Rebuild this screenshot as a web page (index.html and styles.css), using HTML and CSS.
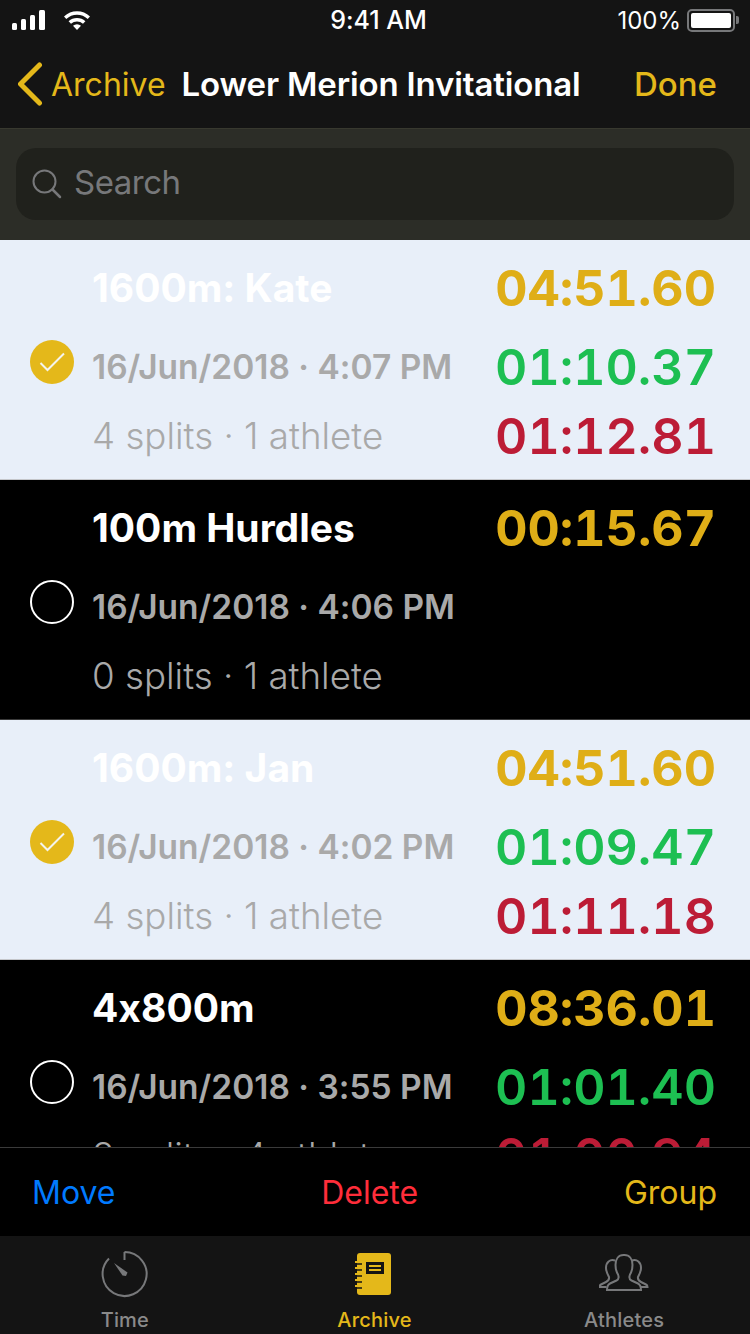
FILE: index.html
```html
<!DOCTYPE html>
<html lang="en">
<head>
	<meta charset="UTF-8">
	<title>Archive</title>
	<link rel="stylesheet" href="styles.css">
</head>
<body>
	<div class="status">
		<div class="status-left">
			<svg class="signal" width="34" height="20" viewBox="0 0 34 20">
				<rect x="0" y="13" width="5" height="7" rx="1.5"/>
				<rect x="9" y="9" width="5" height="11" rx="1.5"/>
				<rect x="18" y="5" width="5" height="15" rx="1.5"/>
				<rect x="27" y="0" width="6" height="20" rx="1.5"/>
			</svg>
			<svg class="wifi" width="28" height="20" viewBox="0 0 28 20">
				<path d="M1 6.5a19 19 0 0 1 26 0l-2.3 2.5a15.600 15.600 0 0 0-21.400 0z"/>
				<path d="M5.600 11.300a12.400 12.400 0 0 1 16.800 0l-2.400 2.500a9 9 0 0 0-12 0z"/>
				<path d="M10 15.800a6 6 0 0 1 8 0l-4 4.200z"/>
			</svg>
		</div>
		<div class="clock">9:41 AM</div>
		<div class="status-right">
			<span>100%</span>
			<span class="battery"><span class="battery-fill"></span></span>
			<span class="battery-tip"></span>
		</div>
	</div>

	<div class="nav">
		<div class="back">
			<svg width="26" height="44" viewBox="0 0 26 44">
				<path d="M21.500 3 2.500 22l19 19" fill="none" stroke="#e4b81a" stroke-width="5" stroke-linecap="round" stroke-linejoin="round"/>
			</svg>
			<span>Archive</span>
		</div>
		<div class="nav-title">Lower Merion Invitational</div>
		<div class="done">Done</div>
	</div>

	<div class="search-bar">
		<div class="search-field">
			<svg width="30" height="30" viewBox="0 0 30 30">
				<circle cx="12.500" cy="12.500" r="11" fill="none" stroke="#77787a" stroke-width="2"/>
				<path d="M20.500 20.500 28 28" stroke="#77787a" stroke-width="2.500" stroke-linecap="round"/>
			</svg>
			<span class="search-text">Search</span>
		</div>
	</div>

	<div class="list">
		<div class="row selected">
			<span class="check">
				<svg width="26" height="20" viewBox="0 0 26 20"><path d="M1.500 11 8.500 18 25 1.500" fill="none" stroke="#f4f4ee" stroke-width="2"/></svg>
			</span>
			<div class="info">
				<div class="title">1600m: Kate</div>
				<div class="date">16/Jun/2018 · 4:07 PM</div>
				<div class="meta">4 splits · 1 athlete</div>
			</div>
			<div class="times">
				<div class="time total">04:51.60</div>
				<div class="time best">01:10.37</div>
				<div class="time worst">01:12.81</div>
			</div>
		</div>

		<div class="row">
			<span class="check"></span>
			<div class="info">
				<div class="title">100m Hurdles</div>
				<div class="date">16/Jun/2018 · 4:06 PM</div>
				<div class="meta">0 splits · 1 athlete</div>
			</div>
			<div class="times">
				<div class="time total">00:15.67</div>
			</div>
		</div>

		<div class="row selected">
			<span class="check">
				<svg width="26" height="20" viewBox="0 0 26 20"><path d="M1.500 11 8.500 18 25 1.500" fill="none" stroke="#f4f4ee" stroke-width="2"/></svg>
			</span>
			<div class="info">
				<div class="title">1600m: Jan</div>
				<div class="date">16/Jun/2018 · 4:02 PM</div>
				<div class="meta">4 splits · 1 athlete</div>
			</div>
			<div class="times">
				<div class="time total">04:51.60</div>
				<div class="time best">01:09.47</div>
				<div class="time worst">01:11.18</div>
			</div>
		</div>

		<div class="row">
			<span class="check"></span>
			<div class="info">
				<div class="title">4x800m</div>
				<div class="date">16/Jun/2018 · 3:55 PM</div>
				<div class="meta">8 splits · 4 athletes</div>
			</div>
			<div class="times">
				<div class="time total">08:36.01</div>
				<div class="time best">01:01.40</div>
				<div class="time worst">01:00.94</div>
			</div>
		</div>
	</div>

	<div class="toolbar">
		<span class="move">Move</span>
		<span class="delete">Delete</span>
		<span class="group">Group</span>
	</div>

	<div class="tabs">
		<div class="tab">
			<svg width="48" height="48" viewBox="0 0 48 48">
				<path d="M23.500 2a22 22 0 1 1-15.500 6.500" fill="none" stroke="#77787a" stroke-width="2"/>
				<path d="M23.500 2v8" fill="none" stroke="#77787a" stroke-width="2"/>
				<path d="M13 13 26.500 22.500 25 26 21.500 25.500z" fill="#77787a"/>
			</svg>
			<span>Time</span>
		</div>
		<div class="tab active">
			<svg class="archive-icon" width="36" height="42" viewBox="0 0 36 42">
				<rect x="2" y="0" width="34" height="42" rx="3" fill="#e4b81a"/>
				<path d="M0 9h6M0 15h6M0 21h6M0 27h6M0 33h6" stroke="#e4b81a" stroke-width="2"/>
				<path d="M2 11h5M2 17h5M2 23h5M2 29h5M2 35h5" stroke="#141414" stroke-width="1.500"/>
				<rect x="11" y="9" width="18" height="12" fill="#141414"/>
				<path d="M14 13h12M14 17h12" stroke="#e4b81a" stroke-width="2"/>
			</svg>
			<span>Archive</span>
		</div>
		<div class="tab">
			<svg class="athletes-icon" width="50" height="38" viewBox="0 0 50 38" fill="none" stroke="#77787a" stroke-width="2">
				<path d="M16 6.500c-5-1.500-9 1.500-9 7.500 0 3.500 1.500 6 3 9 .5 2.500-1 4-3 5l-5 2.500c-1 .5-1.500 1.500-1.500 2.500h7"/>
				<path d="M33 6.500c5-1.500 9 1.500 9 7.500 0 3.500-1.500 6-3 9-.5 2.500 1 4 3 5l5 2.500c1 .5 1.500 1.500 1.500 2.500h-7"/>
				<path d="M24.500 1c-5 0-8 4-8 10 0 4 1 7 2.500 9.500 1 2.500.5 5-1.500 6l-6.500 3c-2 1-3 3-3 6.500h34c0-3.500-1-5.500-3-6.500l-6.500-3c-2-1-2.500-3.500-1.500-6 1.500-2.500 2.500-5.500 2.500-9.500 0-6-3-10-8-10z"/>
			</svg>
			<span>Athletes</span>
		</div>
	</div>
</body>
</html>
```

FILE: styles.css
```css
* {
	box-sizing: border-box;
}
html,
body {
	margin: 0;
	padding: 0;
}
body {
	display: flex;
	flex-direction: column;
	width: 750px;
	height: 1334px;
	overflow: hidden;
	background-color: #000;
	color: #fff;
	font-family: Inter, "Noto Sans", "Liberation Sans", sans-serif;
	font-feature-settings: "calt" 0;
}

/* status bar */
.status {
	display: flex;
	align-items: center;
	justify-content: space-between;
	flex: none;
	height: 40px;
	padding: 0 11px 0 12px;
	background-color: #141414;
	font-size: 24px;
}
.status-left {
	display: flex;
	align-items: center;
	gap: 17px;
	width: 206px;
}
.status-left svg {
	fill: #fff;
}
.clock {
	font-size: 25px;
	font-weight: 500;
}
.status-right {
	display: flex;
	align-items: center;
	justify-content: flex-end;
	width: 200px;
}
.battery {
	display: block;
	width: 48px;
	height: 23px;
	margin-left: 6px;
	padding: 2px;
	border: 2px solid #77787a;
	border-radius: 5px;
}
.battery-fill {
	display: block;
	height: 100%;
	border-radius: 2px;
	background-color: #fff;
}
.battery-tip {
	display: block;
	width: 3px;
	height: 8px;
	margin-left: 1px;
	border-radius: 0 2px 2px 0;
	background-color: #77787a;
}

/* nav bar */
.nav {
	display: flex;
	align-items: center;
	flex: none;
	height: 89px;
	padding: 0 33px 0 18px;
	background-color: #141414;
	border-bottom: 1px solid #38392f;
	font-size: 33px;
}
.back {
	display: flex;
	align-items: center;
	gap: 7px;
	font-size: 32px;
	color: #e4b81a;
}
.nav-title {
	margin-left: 16px;
	font-weight: 600;
	letter-spacing: -.15px;
}
.done {
	margin-left: auto;
	color: #e4b81a;
	font-weight: 500;
}

/* search */
.search-bar {
	flex: none;
	height: 111px;
	padding: 19px 16px 20px;
	background-color: #2c2d27;
}
.search-field {
	display: flex;
	align-items: center;
	gap: 12px;
	height: 72px;
	padding-left: 16px;
	border-radius: 20px;
	background-color: #20211c;
	color: #77787a;
	font-size: 33px;
}
.search-text {
	padding-bottom: 5px;
	letter-spacing: -.5px;
}

/* list */
.list {
	flex: 1;
	min-height: 0;
	overflow: hidden;
}
.row {
	display: flex;
	height: 240px;
	padding: 20px 34px 0 30px;
	border-bottom: 1px solid #3a3a3a;
	background-color: #000;
}
.row.selected {
	border-bottom-color: #c4c6ca;
	background-color: #e8eff9;
}
.check {
	display: flex;
	align-items: center;
	justify-content: center;
	flex: none;
	width: 44px;
	height: 44px;
	margin-top: 80px;
	margin-right: 18px;
	border: 2px solid #fff;
	border-radius: 50%;
}
.selected .check {
	border: none;
	background-color: #e4b81a;
}
.info {
	flex: 1;
}
.title,
.time:first-child {
	height: 56px;
	line-height: 56px;
	margin-bottom: 16px;
}
.title {
	font-size: 39px;
	font-weight: 700;
	color: #fff;
}
.date {
	height: 70px;
	line-height: 70px;
	font-size: 33.5px;
	font-weight: 600;
	color: #a9a9a9;
}
.meta {
	height: 68px;
	line-height: 67px;
	font-size: 36.700px;
	font-weight: 300;
	color: #a9a9a9;
}
.time {
	height: 70px;
	line-height: 70px;
	font-size: 50px;
	font-weight: 600;
	font-variant-numeric: tabular-nums;
	text-align: right;
}
.time.total {
	color: #dfae17;
	font-weight: 700;
}
.time.best {
	color: #1dbf52;
}
.time.worst {
	height: 68px;
	line-height: 69px;
	color: #bc1c36;
}

/* toolbar */
.toolbar {
	display: flex;
	align-items: center;
	justify-content: space-between;
	flex: none;
	height: 89px;
	padding: 0 33px 0 32px;
	border-top: 1px solid #3a3a3a;
	background-color: #000;
	font-size: 32px;
}
.move {
	color: #007aff;
}
.delete {
	color: #ff2d3a;
}
.group {
	color: #e4b81a;
}

/* tab bar */
.tabs {
	display: flex;
	flex: none;
	height: 98px;
	padding-right: 1px;
	background-color: #141414;
}
.tab {
	display: flex;
	flex-direction: column;
	align-items: center;
	justify-content: space-between;
	flex: 1;
	height: 98px;
	padding: 14px 0 2px;
	color: #8a8a8a;
	font-size: 20px;
	font-weight: 500;
	letter-spacing: .2px;
}
.tab.active {
	color: #e4b81a;
}
.archive-icon {
	margin-top: 3px;
	margin-right: 3px;
}
.athletes-icon {
	margin-top: 4px;
}
```
